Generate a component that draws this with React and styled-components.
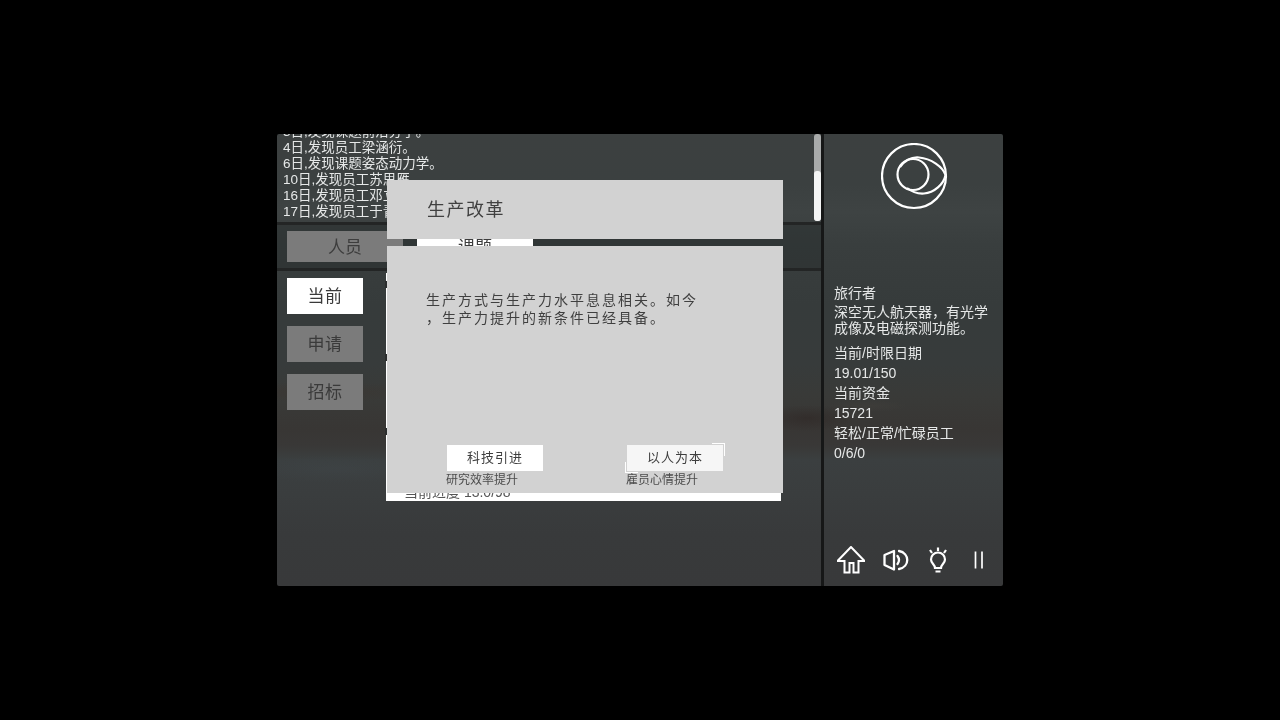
import React from "react";
import styled, { createGlobalStyle } from "styled-components";

const Global = createGlobalStyle`
  html, body { margin: 0; padding: 0; background: #000; height: 100%; overflow: hidden; }
  #root { height: 100%; }
`;

const Page = styled.div`
  height: 720px;
  display: flex;
  align-items: center;
  justify-content: center;
  background: #000;
  font-family: "Liberation Sans", "Noto Sans CJK SC", sans-serif;
`;

const Stage = styled.div`
  position: relative;
  width: 726px;
  height: 452px;
  overflow: hidden;
  display: flex;
  border-radius: 2px;
  will-change: transform;
  filter: blur(0.4px);
  background:
    radial-gradient(ellipse 50px 13px at 530px 284px, rgba(46, 38, 36, 0.6), transparent),
    radial-gradient(ellipse 40px 6px at 590px 272px, rgba(66, 64, 60, 0.5), transparent),
    radial-gradient(ellipse 120px 10px at 40px 258px, rgba(60, 50, 44, 0.4), transparent),
    radial-gradient(ellipse 90px 14px at 60px 335px, rgba(66, 74, 78, 0.3), transparent),
    linear-gradient(
      180deg,
      #3c4040 0,
      #3b4040 50px,
      #3e4343 78px,
      #393e3e 110px,
      #363b3b 170px,
      #373b3b 230px,
      #393a38 262px,
      #383634 295px,
      #393837 312px,
      #3b3f40 326px,
      #3a3d3e 360px,
      #383a3b 400px,
      #38393a 452px
    );
`;

const LeftColumn = styled.div`
  width: 544px;
  display: flex;
  flex-direction: column;
`;

const HDivider = styled.div`
  height: 3px;
  flex: none;
  background: #232525;
`;

const VDivider = styled.div`
  width: 3px;
  flex: none;
  background: #161717;
`;

const LogPanel = styled.div`
  position: relative;
  height: 88px;
  overflow: hidden;
  display: flex;
  flex-direction: column;
  justify-content: flex-end;
  padding: 0 6px 2px;
  box-sizing: border-box;
`;

const LogLine = styled.div`
  font-size: 13.5px;
  line-height: 16px;
  color: #e6e8e8;
  white-space: nowrap;
`;

const ScrollTrack = styled.div`
  position: absolute;
  top: 0;
  right: 0;
  bottom: 1px;
  width: 7px;
  border-radius: 3px;
  background: #a9abab;
`;

const ScrollThumb = styled.div`
  position: absolute;
  left: 0;
  right: 0;
  top: 37px;
  bottom: 0;
  border-radius: 3px;
  background: #f4f5f5;
`;

const TabBar = styled.div`
  height: 43px;
  display: flex;
  gap: 14px;
  padding: 6px 10px;
  box-sizing: border-box;
  background: rgba(40, 46, 46, 0.5);
`;

const Tab = styled.div`
  width: 116px;
  height: 31px;
  padding-bottom: 2px;
  box-sizing: border-box;
  display: flex;
  align-items: center;
  justify-content: center;
  font-size: 17px;
  color: #3d3d3d;
  background: ${(p) => (p.$active ? "#ffffff" : "#7b7b7b")};
`;

const MainPanel = styled.div`
  position: relative;
  flex: 1;
  padding: 7px 10px;
  display: flex;
  flex-direction: column;
  gap: 12px;
`;

const SideButton = styled.div`
  width: 76px;
  height: 36px;
  padding-bottom: 3px;
  box-sizing: border-box;
  display: flex;
  align-items: center;
  justify-content: center;
  font-size: 17px;
  letter-spacing: 0.5px;
  color: #3a3a3a;
  background: ${(p) => (p.$active ? "#ffffff" : "#7b7b7b")};
`;

const ProjectCard = styled.div`
  position: absolute;
  left: 109px;
  top: 2px;
  width: 395px;
  height: 228px;
  background: #fff;
  display: flex;
  align-items: flex-end;
  padding: 0 18px 1px;
  box-sizing: border-box;
`;

const Notch = styled.div`
  position: absolute;
  left: -1px;
  top: ${(p) => p.$top}px;
  width: 2px;
  height: 7px;
  background: #2c2e2e;
`;

const Progress = styled.div`
  font-size: 14px;
  line-height: 16px;
  color: #555;
`;

const SidePanel = styled.div`
  flex: 1;
  display: flex;
  flex-direction: column;
  padding: 9px 10px 12px;
  box-sizing: border-box;
`;

const LogoWrap = styled.div`
  height: 140px;
  padding-left: 47px;
`;

const InfoLine = styled.div`
  font-size: 14px;
  line-height: ${(p) => p.$lh || 20}px;
  height: ${(p) => p.$h || 20}px;
  color: #e6e8e8;
  white-space: nowrap;
`;

const Spacer = styled.div`
  height: ${(p) => p.$h}px;
`;

const IconRow = styled.div`
  margin-top: auto;
  display: flex;
  align-items: center;
  padding-left: 3px;
`;

const IconSlot = styled.div`
  display: flex;
  margin-left: ${(p) => p.$ml || 0}px;
`;

const Modal = styled.div`
  position: absolute;
  left: 110px;
  top: 46px;
  width: 396px;
  display: flex;
  flex-direction: column;
  gap: 7px;
`;

const ModalHead = styled.div`
  height: 59px;
  padding: 0 0 4px 40px;
  box-sizing: border-box;
  background: #d2d2d2;
  display: flex;
  align-items: center;
  font-size: 18px;
  letter-spacing: 1.5px;
  color: #404040;
`;

const ModalBody = styled.div`
  height: 247px;
  background: #d2d2d2;
  padding: 45px 39px 0;
  box-sizing: border-box;
  display: flex;
  flex-direction: column;
`;

const ModalText = styled.div`
  font-size: 14px;
  line-height: 18px;
  letter-spacing: 2px;
  color: #404040;
  white-space: nowrap;
`;

const Choices = styled.div`
  margin-top: auto;
  margin-bottom: 6px;
  display: flex;
  gap: 84px;
  padding-left: 21px;
`;

const Choice = styled.div`
  width: 96px;
  display: flex;
  flex-direction: column;
`;

const ChoiceButton = styled.div`
  position: relative;
  height: 26px;
  padding-bottom: 4px;
  box-sizing: border-box;
  display: flex;
  align-items: center;
  justify-content: center;
  font-size: 13px;
  letter-spacing: 1px;
  color: #3f3f3f;
  background: ${(p) => (p.$soft ? "#f6f6f6" : "#ffffff")};
  ${(p) =>
    p.$soft &&
    `
    &::before {
      content: "";
      position: absolute;
      right: -2px;
      top: -2px;
      width: 12px;
      height: 12px;
      border-top: 1px solid #fff;
      border-right: 1px solid #fff;
    }
    &::after {
      content: "";
      position: absolute;
      left: -2px;
      bottom: -2px;
      width: 12px;
      height: 10px;
      border-left: 1px solid #fff;
      border-bottom: 1px solid #fff;
    }
  `}
`;

const Caption = styled.div`
  margin-top: 2px;
  margin-left: -1px;
  font-size: 12px;
  line-height: 14px;
  color: #4c4c4c;
  white-space: nowrap;
`;

const Logo = () => (
  <svg width="68" height="68" viewBox="0 0 68 68" fill="none" stroke="#ffffff" strokeWidth="2.2">
    <circle cx="33" cy="33" r="32" />
    <circle cx="32" cy="31.5" r="15.5" />
    <path d="M19 24 C25 16 32 14 38 14.5 C50 15.5 62 24 64.5 32 C63 41 53 50 43 50.5 C36 51 31 49 26 45" />
  </svg>
);

const HomeIcon = () => (
  <svg width="28" height="28" viewBox="0 0 28 28" fill="none" stroke="#ffffff" strokeWidth="2">
    <path d="M14 1 L0.5 15 H7.5 V26.5 H12.5 V17 H16.5 V26.5 H21.5 V15 H27.5 Z" />
  </svg>
);

const SpeakerIcon = () => (
  <svg width="26" height="22" viewBox="0 0 26 22" fill="none" stroke="#ffffff" strokeWidth="2.3" strokeLinecap="round">
    <path d="M1.5 6 L11 2 V20.5 L1.5 16 Z" strokeLinejoin="round" />
    <path d="M14.5 7 Q17.5 11 14.5 15" />
    <path d="M16 2 C27 4 27 18 16 20" />
  </svg>
);

const BulbIcon = () => (
  <svg width="20" height="26" viewBox="0 0 20 26" fill="none" stroke="#ffffff" strokeWidth="2.2">
    <path d="M10 0.5 V4 M2 3 L4 6 M18 3 L16 6" />
    <path d="M7 21 C7 17.5 3 16.5 3 12.5 A7 7 0 0 1 17 12.5 C17 16.5 13 17.5 13 21 Z" />
    <path d="M7.5 24.5 H12.5" />
  </svg>
);

const PauseIcon = () => (
  <svg width="10" height="18" viewBox="0 0 10 18" fill="none" stroke="#ffffff" strokeWidth="1.7">
    <path d="M1.5 0.5 V17.5 M8 0.5 V17.5" />
  </svg>
);

const logs = [
  "3日,发现课题前沿分子。",
  "4日,发现员工梁涵衍。",
  "6日,发现课题姿态动力学。",
  "10日,发现员工苏思雁。",
  "16日,发现员工邓立。",
  "17日,发现员工于青。",
];

export default function App() {
  return (
    <Page>
      <Global />
      <Stage>
        <LeftColumn>
          <LogPanel>
            {logs.map((l) => (
              <LogLine key={l}>{l}</LogLine>
            ))}
            <ScrollTrack>
              <ScrollThumb />
            </ScrollTrack>
          </LogPanel>
          <HDivider />
          <TabBar>
            <Tab>人员</Tab>
            <Tab $active>课题</Tab>
          </TabBar>
          <HDivider />
          <MainPanel>
            <SideButton $active>当前</SideButton>
            <SideButton>申请</SideButton>
            <SideButton>招标</SideButton>
            <ProjectCard>
              <Notch $top={8} />
              <Notch $top={81} />
              <Notch $top={155} />
              <Progress>当前进度 13.0/98</Progress>
            </ProjectCard>
          </MainPanel>
        </LeftColumn>
        <VDivider />
        <SidePanel>
          <LogoWrap>
            <Logo />
          </LogoWrap>
          <InfoLine $h={21}>旅行者</InfoLine>
          <InfoLine $lh={16} $h={16}>深空无人航天器，有光学</InfoLine>
          <InfoLine $lh={16} $h={16}>成像及电磁探测功能。</InfoLine>
          <Spacer $h={7} />
          <InfoLine>当前/时限日期</InfoLine>
          <InfoLine>19.01/150</InfoLine>
          <InfoLine>当前资金</InfoLine>
          <InfoLine>15721</InfoLine>
          <InfoLine>轻松/正常/忙碌员工</InfoLine>
          <InfoLine>0/6/0</InfoLine>
          <IconRow>
            <IconSlot><HomeIcon /></IconSlot>
            <IconSlot $ml={18}><SpeakerIcon /></IconSlot>
            <IconSlot $ml={19}><BulbIcon /></IconSlot>
            <IconSlot $ml={26}><PauseIcon /></IconSlot>
          </IconRow>
        </SidePanel>
        <Modal>
          <ModalHead>生产改革</ModalHead>
          <ModalBody>
            <ModalText>
              生产方式与生产力水平息息相关。如今
              <br />
              ，生产力提升的新条件已经具备。
            </ModalText>
            <Choices>
              <Choice>
                <ChoiceButton>科技引进</ChoiceButton>
                <Caption>研究效率提升</Caption>
              </Choice>
              <Choice>
                <ChoiceButton $soft>以人为本</ChoiceButton>
                <Caption>雇员心情提升</Caption>
              </Choice>
            </Choices>
          </ModalBody>
        </Modal>
      </Stage>
    </Page>
  );
}
